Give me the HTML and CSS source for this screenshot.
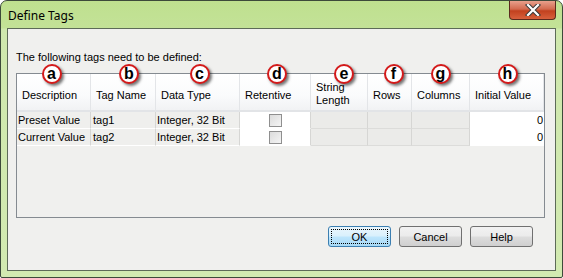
FILE: index.html
```html
<!DOCTYPE html>
<html lang="en">
<head>
    <meta charset="UTF-8">
    <title>Define Tags</title>
    <link rel="stylesheet" href="styles.css">
</head>
<body>
    <div class="window">
        <div class="titlebar">
            <span class="title">Define Tags</span>
            <div class="close">
                <svg width="16" height="12" viewBox="0 0 16 12">
                    <path d="M3,1 L13,11 M13,1 L3,11" stroke="#3a3a3a" stroke-width="4.2" stroke-linecap="square"/>
                    <path d="M3,1 L13,11 M13,1 L3,11" stroke="#ffffff" stroke-width="2.2" stroke-linecap="square"/>
                </svg>
            </div>
        </div>
        <div class="client">
            <div class="label">The following tags need to be defined:</div>
            <div class="grid">
                <!-- header -->
                <div class="hd"><span class="mark">a</span>Description</div>
                <div class="hd"><span class="mark">b</span>Tag Name</div>
                <div class="hd"><span class="mark">c</span>Data Type</div>
                <div class="hd"><span class="mark">d</span>Retentive</div>
                <div class="hd two"><span class="mark">e</span>String<br>Length</div>
                <div class="hd"><span class="mark">f</span>Rows</div>
                <div class="hd"><span class="mark">g</span>Columns</div>
                <div class="hd"><span class="mark">h</span>Initial Value</div>

                <!-- rows -->
                <div class="cell">Preset Value</div>
                <div class="cell">tag1</div>
                <div class="cell">Integer, 32 Bit</div>
                <div class="cell white center"><span class="check"></span></div>
                <div class="cell dim"></div>
                <div class="cell dim"></div>
                <div class="cell dim"></div>
                <div class="cell white num">0</div>

                <div class="cell">Current Value</div>
                <div class="cell">tag2</div>
                <div class="cell">Integer, 32 Bit</div>
                <div class="cell white center"><span class="check"></span></div>
                <div class="cell dim"></div>
                <div class="cell dim"></div>
                <div class="cell dim"></div>
                <div class="cell white num">0</div>
            </div>
            <div class="buttons">
                <button class="btn default"><span>OK</span></button>
                <button class="btn"><span>Cancel</span></button>
                <button class="btn"><span>Help</span></button>
            </div>
        </div>
    </div>
</body>
</html>
```

FILE: styles.css
```css
body {
    margin: 0;
    background: #ffffff;
    font-family: "Liberation Sans", Arial, sans-serif;
    font-size: 11px;
    color: #000;
}
.window {
    width: 563px;
    height: 278px;
    box-sizing: border-box;
    border: 1px solid #3d4a3a;
    border-radius: 7px 7px 2px 2px;
    background: linear-gradient(180deg, #bfe08f 0px, #c3e297 27px, #cfe8ad 28px, #d2eab1 100%);
    padding: 0 6px 6px 6px;
    display: flex;
    flex-direction: column;
}
.titlebar {
    height: 27px;
    display: flex;
    align-items: flex-start;
    justify-content: space-between;
}
.title {
    font-family: "Noto Sans", "Open Sans", sans-serif;
    font-size: 12px;
    margin: 6px 0 0 1px;
    color: #000;
}
.close {
    width: 45px;
    height: 18px;
    border: 1px solid #5a2a1e;
    border-top: none;
    border-radius: 0 0 4px 4px;
    background: linear-gradient(180deg, #e8a08c 0%, #d36a4f 45%, #c2411f 55%, #d8603c 100%);
    display: flex;
    align-items: center;
    justify-content: center;
}
.client {
    flex: 1;
    background: #f0f0ee;
    border: 1px solid #5d6b58;
    padding: 20px 10px 0 8px;
    display: flex;
    flex-direction: column;
}
.label {
    height: 18px;
    line-height: 14px;
    margin: 1px 0 5px 0;
}
.grid {
    height: 145px;
    box-sizing: border-box;
    border: 1px solid #858b91;
    background: #f0f0ee;
    display: grid;
    grid-template-columns: 74px 65px 84px 71px 57px 44px 58px 74px;
    grid-template-rows: 38px 17px 17px;
    align-content: start;
}
.hd {
    position: relative;
    background: linear-gradient(180deg, #ffffff 0%, #fafbfc 60%, #f1f2f4 100%);
    border-right: 1px solid #e3e5e8;
    border-bottom: 2px solid #e2e4e7;
    padding: 6px 0 0 5px;
    display: flex;
    align-items: center;
    box-sizing: border-box;
    white-space: nowrap;
}
.hd.two {
    line-height: 13px;
    align-items: flex-start;
    padding-top: 7px;
}
.mark {
    position: absolute;
    top: -10px;
    left: 50%;
    margin-left: -10px;
    width: 16px;
    height: 16px;
    border: 2px solid #d41a1a;
    border-radius: 50%;
    background: #ffffff;
    box-shadow: 2px 2px 3px rgba(0, 0, 0, 0.55);
    font-size: 16px;
    font-weight: bold;
    line-height: 15px;
    text-align: center;
    color: #000;
}
.hd:nth-child(1) .mark { margin-left: -12px; }
.hd:nth-child(2) .mark { margin-left: -4px; }
.hd:nth-child(3) .mark { margin-left: -8px; }
.hd:nth-child(4) .mark { margin-left: -8px; }
.hd:nth-child(5) .mark { margin-left: -5px; }
.hd:nth-child(6) .mark { margin-left: -6px; }
.hd:nth-child(7) .mark { margin-left: -10px; }
.hd:nth-child(8) .mark { margin-left: -9px; }
.cell {
    background: #efefed;
    border-right: 1px solid #d6d6d4;
    border-bottom: 1px solid #ffffff;
    padding-left: 1px;
    line-height: 16px;
    white-space: nowrap;
    overflow: hidden;
}
.cell:nth-child(8n+2) { padding-left: 2px; }
.cell.white { background: #ffffff; border-bottom-color: #ffffff; }
.cell.dim { background: #ebebe9; border-bottom-color: #dcdcda; }
.cell.center {
    display: flex;
    align-items: center;
    justify-content: center;
}
.cell.num {
    text-align: right;
    padding-right: 1px;
    border-right: none;
    color: #000;
}
.check {
    width: 11px;
    height: 11px;
    border: 1px solid #8f8f8f;
    background: linear-gradient(135deg, #dcdcdc 0%, #f4f4f4 100%);
}
.buttons {
    display: flex;
    justify-content: flex-end;
    gap: 8px;
    margin-top: 8px;
    padding-right: 12px;
}
.btn {
    width: 63px;
    height: 21px;
    padding: 2px;
    border: 1px solid #707070;
    border-radius: 3px;
    background: linear-gradient(180deg, #f2f2f2 0%, #ebebeb 48%, #dddddd 52%, #cfcfcf 100%);
    font-family: "Liberation Sans", Arial, sans-serif;
    font-size: 11px;
    color: #000;
    display: flex;
}
.btn span {
    flex: 1;
    display: flex;
    align-items: center;
    justify-content: center;
    border: 1px dotted transparent;
}
.btn.default {
    border-color: #3c7fb1;
    background: linear-gradient(180deg, #eaf6fd 0%, #d9f0fc 48%, #bee6fd 52%, #a7d9f5 100%);
}
.btn.default span { border-color: #000; }
```
